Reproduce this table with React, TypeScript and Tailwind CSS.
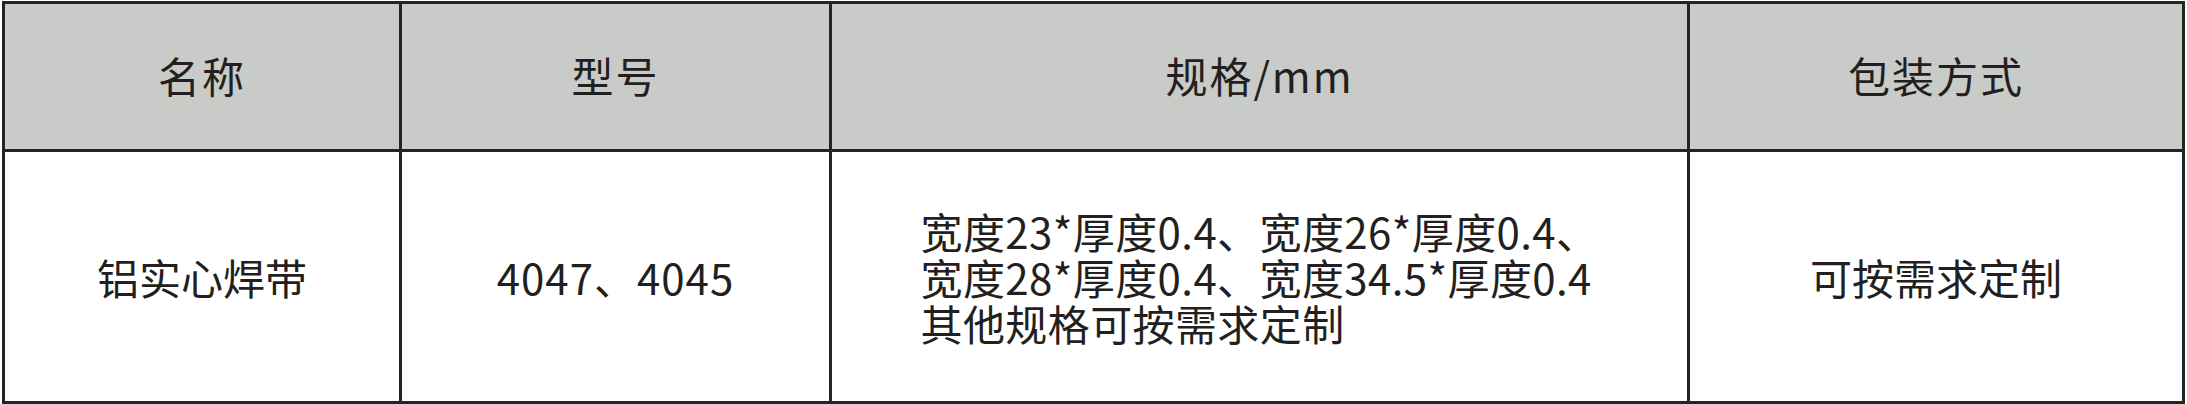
const font = { fontFamily: '"Noto Sans CJK SC", "Noto Sans", sans-serif' };

const head = ["名称", "型号", "规格/mm", "包装方式"];

export default function App() {
  return (
    <div className="bg-white w-[2187px] h-[404px] pt-[1px] pl-[2px]" style={font}>
      <div className="w-[2183px] border-[3px] border-[#262324] text-[42px] text-[#231f20] leading-none">
        <div className="grid grid-cols-[394px_430px_858px_495px] bg-[#c8cbc8]">
          {head.map((h, i) => (
            <div
              key={h}
              className={`h-[145px] flex items-center justify-center ${i > 0 ? "border-l-[3px] border-[#262324]" : ""}`}
            >
              <span className="tracking-[2px] -mt-[4px]">{h}</span>
            </div>
          ))}
        </div>
        <div className="grid grid-cols-[394px_430px_858px_495px] border-t-[3px] border-[#262324] bg-white">
          <div className="h-[249px] flex items-center justify-center">
            <span>铝实心焊带</span>
          </div>
          <div className="h-[249px] flex items-center justify-center border-l-[3px] border-[#262324]">
            <span className="tracking-[1px]">4047、4045</span>
          </div>
          <div className="h-[249px] flex items-center justify-center border-l-[3px] border-[#262324]">
            <div className="text-left leading-[46px] whitespace-nowrap tracking-[0.4px]">
              <p>宽度23*厚度0.4、宽度26*厚度0.4、</p>
              <p>宽度28*厚度0.4、宽度34.5*厚度0.4</p>
              <p>其他规格可按需求定制</p>
            </div>
          </div>
          <div className="h-[249px] flex items-center justify-center border-l-[3px] border-[#262324]">
            <span>可按需求定制</span>
          </div>
        </div>
      </div>
    </div>
  );
}
